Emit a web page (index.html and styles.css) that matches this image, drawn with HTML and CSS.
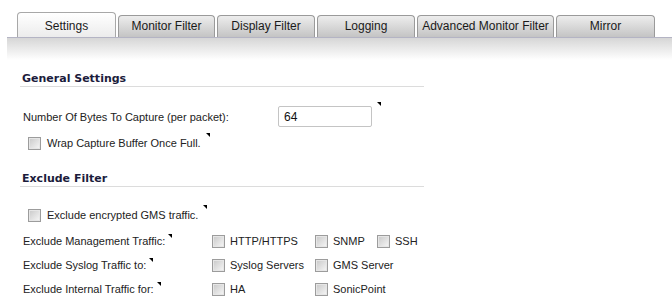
FILE: index.html
```html
<!DOCTYPE html>
<html lang="en">
  <head>
    <meta charset="UTF-8" />
    <meta name="viewport" content="width=device-width, initial-scale=1.0" />
    <title>Packet Monitor Settings</title>
    <link rel="stylesheet" href="styles.css">
  </head>
  <body>
    <div class="tabs">
      <div class="tab active" style="width: 99px">Settings</div>
      <div class="tab" style="width: 97px">Monitor Filter</div>
      <div class="tab" style="width: 98px">Display Filter</div>
      <div class="tab" style="width: 98px">Logging</div>
      <div class="tab" style="width: 137px">Advanced Monitor Filter</div>
      <div class="tab" style="width: 99px">Mirror</div>
    </div>
    <div class="tab-band"></div>

    <div class="content">
      <h2 class="group-title">General Settings</h2>
      <div class="field-row">
        <span class="field-label">Number Of Bytes To Capture (per packet):</span>
        <input class="text-input" type="text" value="64" />
        <span class="tip"></span>
      </div>
      <div class="check-row">
        <input class="check" type="checkbox" />
        <span>Wrap Capture Buffer Once Full.</span>
        <span class="tip"></span>
      </div>

      <h2 class="group-title second">Exclude Filter</h2>
      <div class="check-row encrypted">
        <input class="check" type="checkbox" />
        <span>Exclude encrypted GMS traffic.</span>
        <span class="tip"></span>
      </div>
      <div class="exclude-grid">
        <div class="grid-label">Exclude Management Traffic: <span class="tip"></span></div>
        <label class="opt"><input class="check" type="checkbox" />HTTP/HTTPS</label>
        <label class="opt"><input class="check" type="checkbox" />SNMP</label>
        <label class="opt"><input class="check" type="checkbox" />SSH</label>

        <div class="grid-label">Exclude Syslog Traffic to: <span class="tip"></span></div>
        <label class="opt"><input class="check" type="checkbox" />Syslog Servers</label>
        <label class="opt wide"><input class="check" type="checkbox" />GMS Server</label>

        <div class="grid-label">Exclude Internal Traffic for: <span class="tip"></span></div>
        <label class="opt"><input class="check" type="checkbox" />HA</label>
        <label class="opt wide"><input class="check" type="checkbox" />SonicPoint</label>
      </div>
    </div>
  </body>
</html>
```

FILE: styles.css
```css
body {
  margin: 0;
  background-color: white;
  font-family: "Liberation Sans", Arial, sans-serif;
  font-size: 11px;
  color: #222;
}
.tabs {
  display: flex;
  align-items: flex-end;
  gap: 2px;
  height: 25px;
  margin-top: 12px;
  padding-left: 17px;
}
.tab {
  box-sizing: border-box;
  height: 22px;
  border: 1px solid #9a9a9a;
  border-bottom: none;
  border-radius: 4px 4px 0 0;
  background: linear-gradient(#ededed, #c4c4c4);
  font-family: "Liberation Sans", Arial, sans-serif;
  font-size: 12px;
  color: #1a1a1a;
  text-align: center;
  line-height: 20px;
  white-space: nowrap;
}
.tab.active {
  height: 25px;
  line-height: 20px;
  padding-top: 3px;
  border-color: #a8a8a8;
  background: linear-gradient(#ffffff, #ececec);
}
.tab-band {
  height: 22px;
  margin-left: 7px;
  border-top: 1px solid #b4b4c4;
  background: linear-gradient(#d6d6d6, #ffffff);
}
.content {
  width: 404px;
  margin-left: 20px;
}
.group-title {
  margin: 12px 0 0;
  padding-left: 2px;
  height: 14px;
  line-height: 14px;
  border-bottom: 1px solid #dcdcdc;
  font-family: "DejaVu Sans", Verdana, sans-serif;
  font-size: 11px;
  font-weight: bold;
  color: #1c1c3c;
}
.group-title.second {
  margin-top: 21px;
}
.field-row {
  display: flex;
  align-items: center;
  height: 21px;
  margin-top: 19px;
  padding-left: 3px;
}
.field-label {
  width: 255px;
}
.text-input {
  box-sizing: border-box;
  width: 94px;
  height: 21px;
  margin: 0;
  padding: 1px 5px 0;
  border: 1px solid #c4c4c4;
  border-radius: 2px;
  font-family: "Liberation Sans", Arial, sans-serif;
  font-size: 12px;
  color: #111;
  outline: none;
}
.tip {
  display: inline-block;
  width: 0;
  height: 0;
  border-top: 4px solid #000;
  border-left: 4px solid transparent;
  vertical-align: top;
}
.field-row .tip {
  align-self: flex-start;
  margin: -4px 0 0 5px;
}
.check-row {
  display: flex;
  align-items: center;
  height: 16px;
  margin-top: 8px;
  padding-left: 8px;
}
.check-row .tip {
  align-self: flex-start;
  margin: -2px 0 0 5px;
}
.check-row.encrypted {
  margin-top: 20px;
}
.check {
  appearance: none;
  box-sizing: border-box;
  width: 13px;
  height: 13px;
  margin: 0 6px 0 0;
  border: 1px solid #9c9c9c;
  background: linear-gradient(135deg, #c8c8c8, #f7f7f7);
  box-shadow: inset 0 0 0 1px #e6e6e6;
}
.exclude-grid {
  display: grid;
  grid-template-columns: 189px 103px 62px auto;
  grid-auto-rows: 24px;
  align-items: center;
  margin-top: 6px;
  padding-left: 3px;
}
.grid-label .tip {
  margin-top: -1px;
}
.opt {
  display: flex;
  align-items: center;
  white-space: nowrap;
}
.opt .check {
  margin-right: 5px;
}
.opt.wide {
  grid-column: span 2;
}
```
